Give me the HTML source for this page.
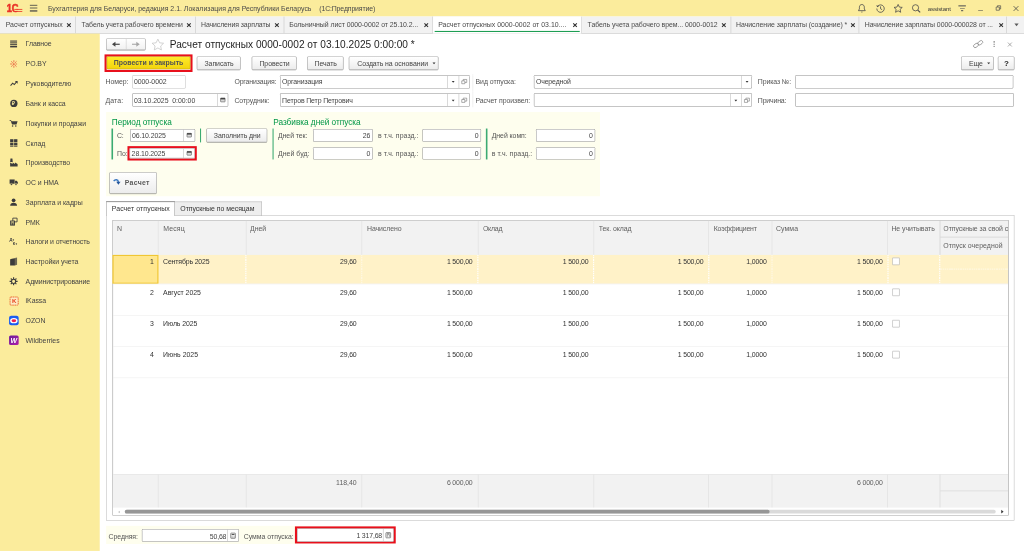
<!DOCTYPE html><html lang="ru"><head><meta charset="utf-8"><title>Расчет отпускных</title><style>
html,body{margin:0;padding:0;background:#fff;}
body{width:1024px;height:551px;overflow:hidden;position:relative;}
#root{position:absolute;left:0;top:0;width:1920px;height:1033px;transform:scale(0.533333);transform-origin:0 0;
 font-family:"Liberation Sans",Arial,sans-serif;font-size:13px;color:#444;background:#fff;overflow:hidden;filter:blur(0.4px);letter-spacing:-0.12px;}
.a{position:absolute;box-sizing:border-box;}
.t{white-space:nowrap;}
.yel{background:#FBEC9C;}
.fld{background:#999;border-radius:2px;z-index:0;}
.fld::before{content:"";position:absolute;left:1px;top:1px;right:1px;bottom:1px;background:#fff;border-radius:1.2px;z-index:-1;}
.btn{background:#a8a8a8;border-radius:2px;box-shadow:0 1px 1px rgba(0,0,0,.22);text-align:center;padding-left:1.5px;white-space:nowrap;color:#444;z-index:0;}
.btn::before{content:"";position:absolute;left:1px;top:1px;right:1px;bottom:1px;background:linear-gradient(#fff,#ececec);border-radius:1.2px;z-index:-1;}
.btn.y{background:#c4a400;}
.btn.y::before{background:linear-gradient(#ffea2a,#f2d40c);}
.btn.nav::before{background:linear-gradient(#fff,#f1f1f1);}
.lbl{color:#555;}
.grn{color:#009646;font-size:15.5px;}
.gbar{background:#3cab72;}
.sub{border-left:1px solid #b8b8b8;}
.hdr{color:#606060;}
.num{color:#333;}
svg{position:absolute;overflow:visible;}
</style></head><body><div id="root">
<div class="a yel" style="left:0.00px;top:0.00px;width:1920.00px;height:31.00px;"></div>
<svg class="a" style="left:12px;top:6px" width="32" height="18" viewBox="0 0 32 18"><text x="0.6" y="16" font-family="Liberation Sans,Arial,sans-serif" font-weight="bold" font-size="20.5" fill="#ea3328" stroke="#ea3328" stroke-width="1.1" textLength="22" lengthAdjust="spacingAndGlyphs">1С</text><path d="M15 11.7 H29.8 M15 15.3 H29.8" stroke="#ea3328" stroke-width="1.7" fill="none"/><path d="M15 13.5H29.8" stroke="#FBEC9C" stroke-width="1.9"/></svg>
<div class="a " style="left:56.20px;top:8.90px;width:13.60px;height:2.20px;background:#6e6a58;"></div>
<div class="a " style="left:56.20px;top:14.10px;width:13.60px;height:2.20px;background:#6e6a58;"></div>
<div class="a " style="left:56.20px;top:19.40px;width:13.60px;height:2.20px;background:#6e6a58;"></div>
<div class="a t " style="left:89.80px;top:6.50px;line-height:20px;color:#4a4a4a;letter-spacing:0.013px;">Бухгалтерия для Беларуси, редакция 2.1. Локализация для Республики Беларусь</div>
<div class="a t " style="left:598.60px;top:6.50px;line-height:20px;color:#4a4a4a;letter-spacing:-0.267px;">(1С:Предприятие)</div>
<svg class="a" style="left:1607.78px;top:7.00px" width="16" height="18" viewBox="0 0 16 18"><path d="M8 1.5c-3 0-4.6 2.3-4.6 5v3.2L1.6 13h12.8l-1.8-3.3V6.5c0-2.7-1.6-5-4.6-5z" fill="none" stroke="#4a4a4a" stroke-width="1.5" stroke-linejoin="round"/><path d="M6.3 15.2a1.8 1.8 0 0 0 3.4 0z" fill="#4a4a4a"/></svg>
<svg class="a" style="left:1641.94px;top:7.00px" width="18" height="18" viewBox="0 0 18 18"><path d="M3.2 5.2A7 7 0 1 1 2 9" fill="none" stroke="#4a4a4a" stroke-width="1.5"/><path d="M0.6 3.2 L3.6 6.6 L6.6 3.6z" fill="#4a4a4a"/><path d="M9 5v4.4l3 1.8" fill="none" stroke="#4a4a4a" stroke-width="1.5"/></svg>
<svg class="a" style="left:1674.75px;top:7.00px" width="18" height="18" viewBox="0 0 18 18"><path d="M9 1.3l2.3 5 5.4.6-4 3.7 1.1 5.4L9 13.3 4.2 16l1.1-5.4-4-3.7 5.4-.6z" fill="none" stroke="#4a4a4a" stroke-width="1.5" stroke-linejoin="round"/></svg>
<svg class="a" style="left:1709.44px;top:7.00px" width="18" height="18" viewBox="0 0 18 18"><circle cx="7.6" cy="7.6" r="5.8" fill="none" stroke="#4a4a4a" stroke-width="1.5"/><path d="M11.8 11.8l4.6 4.6" stroke="#4a4a4a" stroke-width="2"/></svg>
<div class="a t " style="left:1739.62px;top:5.60px;line-height:20px;font-size:11.5px;color:#3a3a3a;letter-spacing:-0.260px;">assistant</div>
<div class="a " style="left:1796.62px;top:10.20px;width:14.82px;height:1.60px;background:#555;"></div>
<div class="a " style="left:1799.62px;top:14.70px;width:9.00px;height:1.60px;background:#555;"></div>
<div class="a " style="left:1802.25px;top:19.20px;width:3.75px;height:1.60px;background:#555;"></div>
<div class="a " style="left:1833.94px;top:18.60px;width:8.81px;height:1.60px;background:#4a4a4a;"></div>
<svg class="a" style="left:1866.62px;top:10.40px" width="10" height="10" viewBox="0 0 10 10"><path d="M.8 3.2h6v6h-6z M3.2 3.2V.8h6v6H6.8" fill="none" stroke="#4a4a4a" stroke-width="1.25"/></svg>
<svg class="a" style="left:1899.38px;top:10.00px" width="12" height="12" viewBox="0 0 12 12"><path d="M1.5 1.5l9 9M10.5 1.5l-9 9" stroke="#4a4a4a" stroke-width="1.5"/></svg>
<div class="a " style="left:0.00px;top:31.00px;width:1920.00px;height:32.00px;background:#f2f2f2;border-bottom:1px solid #c4c4c4;"></div>
<div class="a " style="left:0.00px;top:31.00px;width:141.50px;height:31.00px;border-right:1px solid #c4c4c4;"></div>
<div class="a t " style="left:10.60px;top:36.50px;line-height:20px;color:#4a4a4a;letter-spacing:0.042px;">Расчет отпускных</div>
<svg class="a" style="left:125.40px;top:42.70px" width="8.4" height="8.4" viewBox="0 0 8.4 8.4"><path d="M0.8 0.8l6.8 6.8M7.6 0.8l-6.8 6.8" stroke="#303030" stroke-width="2"/></svg>
<div class="a " style="left:141.50px;top:31.00px;width:225.50px;height:31.00px;border-right:1px solid #c4c4c4;"></div>
<div class="a t " style="left:152.70px;top:36.50px;line-height:20px;color:#4a4a4a;letter-spacing:-0.125px;">Табель учета рабочего времени</div>
<svg class="a" style="left:350.20px;top:42.70px" width="8.4" height="8.4" viewBox="0 0 8.4 8.4"><path d="M0.8 0.8l6.8 6.8M7.6 0.8l-6.8 6.8" stroke="#303030" stroke-width="2"/></svg>
<div class="a " style="left:367.00px;top:31.00px;width:166.00px;height:31.00px;border-right:1px solid #c4c4c4;"></div>
<div class="a t " style="left:377.00px;top:36.50px;line-height:20px;color:#4a4a4a;letter-spacing:-0.215px;">Начисления зарплаты</div>
<svg class="a" style="left:515.00px;top:42.70px" width="8.4" height="8.4" viewBox="0 0 8.4 8.4"><path d="M0.8 0.8l6.8 6.8M7.6 0.8l-6.8 6.8" stroke="#303030" stroke-width="2"/></svg>
<div class="a " style="left:533.00px;top:31.00px;width:279.00px;height:31.00px;border-right:1px solid #c4c4c4;"></div>
<div class="a t " style="left:542.30px;top:36.50px;line-height:20px;color:#4a4a4a;letter-spacing:-0.107px;">Больничный лист 0000-0002 от 25.10.2...</div>
<svg class="a" style="left:794.80px;top:42.70px" width="8.4" height="8.4" viewBox="0 0 8.4 8.4"><path d="M0.8 0.8l6.8 6.8M7.6 0.8l-6.8 6.8" stroke="#303030" stroke-width="2"/></svg>
<div class="a " style="left:812.00px;top:31.00px;width:279.00px;height:32.00px;background:#fff;border-right:1px solid #c4c4c4;"></div>
<div class="a " style="left:815.00px;top:57.50px;width:272.00px;height:2.00px;background:#1e9e54;"></div>
<div class="a t " style="left:821.60px;top:36.50px;line-height:20px;color:#4a4a4a;letter-spacing:0.028px;">Расчет отпускных 0000-0002 от 03.10....</div>
<svg class="a" style="left:1074.20px;top:42.70px" width="8.4" height="8.4" viewBox="0 0 8.4 8.4"><path d="M0.8 0.8l6.8 6.8M7.6 0.8l-6.8 6.8" stroke="#303030" stroke-width="2"/></svg>
<div class="a " style="left:1091.00px;top:31.00px;width:280.00px;height:31.00px;border-right:1px solid #c4c4c4;"></div>
<div class="a t " style="left:1101.60px;top:36.50px;line-height:20px;color:#4a4a4a;letter-spacing:-0.117px;">Табель учета рабочего врем... 0000-0012</div>
<svg class="a" style="left:1352.80px;top:42.70px" width="8.4" height="8.4" viewBox="0 0 8.4 8.4"><path d="M0.8 0.8l6.8 6.8M7.6 0.8l-6.8 6.8" stroke="#303030" stroke-width="2"/></svg>
<div class="a " style="left:1371.00px;top:31.00px;width:240.00px;height:31.00px;border-right:1px solid #c4c4c4;"></div>
<div class="a t " style="left:1380.20px;top:36.50px;line-height:20px;color:#4a4a4a;letter-spacing:-0.083px;">Начисление зарплаты (создание) *</div>
<svg class="a" style="left:1595.20px;top:42.70px" width="8.4" height="8.4" viewBox="0 0 8.4 8.4"><path d="M0.8 0.8l6.8 6.8M7.6 0.8l-6.8 6.8" stroke="#303030" stroke-width="2"/></svg>
<div class="a " style="left:1611.00px;top:31.00px;width:277.00px;height:31.00px;border-right:1px solid #c4c4c4;"></div>
<div class="a t " style="left:1621.50px;top:36.50px;line-height:20px;color:#4a4a4a;letter-spacing:-0.139px;">Начисление зарплаты 0000-000028 от ...</div>
<svg class="a" style="left:1872.60px;top:42.70px" width="8.4" height="8.4" viewBox="0 0 8.4 8.4"><path d="M0.8 0.8l6.8 6.8M7.6 0.8l-6.8 6.8" stroke="#303030" stroke-width="2"/></svg>
<svg class="a" style="left:1901.5px;top:44px" width="8" height="5" viewBox="0 0 8 5"><path d="M0 0h8L4 5z" fill="#5a5a5a"/></svg>
<div class="a yel" style="left:0.00px;top:63.00px;width:186.50px;height:970.00px;"></div>
<svg class="a" style="left:19.00px;top:75.50px" width="13" height="14" viewBox="0 0 13 14"><rect x="0" y="0" width="13" height="2" fill="#3c3c3c"/><rect x="0" y="3.4" width="13" height="2" fill="#3c3c3c"/><rect x="0" y="6.8" width="13" height="2" fill="#3c3c3c"/><rect x="0" y="10.2" width="13" height="2" fill="#3c3c3c"/><rect x="0" y="12.2" width="13" height="1.2" fill="#3c3c3c" opacity=".6"/></svg>
<div class="a t " style="left:48.00px;top:73.40px;line-height:20px;color:#444;">Главное</div>
<svg class="a" style="left:18.50px;top:112.55px" width="14" height="14" viewBox="0 0 14 14"><g stroke="#e4452c" stroke-width="1.3" fill="none"><path d="M7 0v4M7 10v4M0 7h4M10 7h3M2 2l3 3M2 12l3-3M12 2l-3 3M12 12l-3-3"/></g><circle cx="7" cy="7" r="1.6" fill="#e4452c"/></svg>
<div class="a t " style="left:48.00px;top:110.45px;line-height:20px;color:#444;">PO.BY</div>
<svg class="a" style="left:18.50px;top:150.10px" width="14" height="13" viewBox="0 0 14 13"><path d="M0.8 10.5l4-4.5 3 2.6 4.6-5.4" fill="none" stroke="#3c3c3c" stroke-width="2"/><path d="M9 2h5v5z" fill="#3c3c3c"/></svg>
<div class="a t " style="left:48.00px;top:147.50px;line-height:20px;color:#444;">Руководителю</div>
<svg class="a" style="left:18.50px;top:186.65px" width="14" height="14" viewBox="0 0 14 14"><circle cx="7" cy="7" r="6.8" fill="#3c3c3c"/><text x="7" y="10.6" text-anchor="middle" font-size="10" font-weight="bold" fill="#FBEC9C" font-family="Liberation Sans,Arial,sans-serif">₽</text></svg>
<div class="a t " style="left:48.00px;top:184.55px;line-height:20px;color:#444;">Банк и касса</div>
<svg class="a" style="left:18.00px;top:223.70px" width="15" height="14" viewBox="0 0 15 14"><path d="M0 1h2.6l1 2.2H15l-2 6.3H4.6L2 2.6H0z" fill="#3c3c3c"/><circle cx="5.6" cy="12.3" r="1.5" fill="#3c3c3c"/><circle cx="11.6" cy="12.3" r="1.5" fill="#3c3c3c"/></svg>
<div class="a t " style="left:48.00px;top:221.60px;line-height:20px;color:#444;">Покупки и продажи</div>
<svg class="a" style="left:18.50px;top:260.75px" width="14" height="14" viewBox="0 0 14 14"><rect x="0" y="0" width="6.2" height="6" fill="#3c3c3c"/><rect x="0" y="7.2" width="6.2" height="4.4" fill="#3c3c3c"/><rect x="0" y="12.4" width="6.2" height="1.6" fill="#3c3c3c"/><rect x="7.4" y="0" width="6.2" height="6" fill="#3c3c3c"/><rect x="7.4" y="7.2" width="6.2" height="4.4" fill="#3c3c3c"/><rect x="7.4" y="12.4" width="6.2" height="1.6" fill="#3c3c3c"/></svg>
<div class="a t " style="left:48.00px;top:258.65px;line-height:20px;color:#444;">Склад</div>
<svg class="a" style="left:18.50px;top:296.80px" width="14" height="15" viewBox="0 0 14 15"><path d="M0 15V7.6l4.6 3V7.6l4.6 3V7.6l4.8 3V15z" fill="#3c3c3c"/><path d="M.6 0h3.6l.7 6.8H0z" fill="#3c3c3c"/></svg>
<div class="a t " style="left:48.00px;top:295.70px;line-height:20px;color:#444;">Производство</div>
<svg class="a" style="left:17.50px;top:335.35px" width="16" height="13" viewBox="0 0 16 13"><path d="M0 1.5h9.5v8H0z" fill="#3c3c3c"/><path d="M10.3 4h3l2.2 2.6v2.9h-5.2z" fill="#3c3c3c"/><circle cx="3.5" cy="10.6" r="1.8" fill="#3c3c3c" stroke="#FBEC9C" stroke-width=".7"/><circle cx="12" cy="10.6" r="1.8" fill="#3c3c3c" stroke="#FBEC9C" stroke-width=".7"/></svg>
<div class="a t " style="left:48.00px;top:332.75px;line-height:20px;color:#444;">ОС и НМА</div>
<svg class="a" style="left:19.00px;top:371.90px" width="13" height="14" viewBox="0 0 13 14"><circle cx="6.5" cy="3.6" r="3.5" fill="#3c3c3c"/><path d="M0 14c0-4 2.6-6 6.5-6s6.5 2 6.5 6z" fill="#3c3c3c"/></svg>
<div class="a t " style="left:48.00px;top:369.80px;line-height:20px;color:#444;">Зарплата и кадры</div>
<svg class="a" style="left:18.50px;top:408.95px" width="14" height="14" viewBox="0 0 14 14"><path d="M5 0h8v7H5z" fill="none" stroke="#3c3c3c" stroke-width="1.6"/><path d="M0 4.5h9V14H0z" fill="#3c3c3c"/><rect x="1.8" y="6.3" width="5.4" height="2" fill="#FBEC9C"/><rect x="1.8" y="10" width="2" height="1.6" fill="#FBEC9C"/><rect x="5" y="10" width="2" height="1.6" fill="#FBEC9C"/></svg>
<div class="a t " style="left:48.00px;top:406.85px;line-height:20px;color:#444;">РМК</div>
<svg class="a" style="left:17.50px;top:446.00px" width="16" height="14" viewBox="0 0 16 14"><text x="0" y="6" font-size="7.5" font-weight="bold" fill="#3c3c3c" font-family="Liberation Sans,Arial,sans-serif">Дт</text><text x="6" y="13" font-size="7.5" font-weight="bold" fill="#3c3c3c" font-family="Liberation Sans,Arial,sans-serif">Кт</text></svg>
<div class="a t " style="left:48.00px;top:443.90px;line-height:20px;color:#444;letter-spacing:-0.196px;">Налоги и отчетность</div>
<svg class="a" style="left:19.00px;top:482.55px" width="13" height="15" viewBox="0 0 13 15"><path d="M0 3.2L9 1.4V15H0z" fill="#3c3c3c"/><path d="M9 1.4l4-1.4v13.2L9 15z" fill="#3c3c3c" opacity=".75"/><path d="M0 3.2l4-1.6 9-1.6-4 1.4z" fill="#3c3c3c" opacity=".55"/></svg>
<div class="a t " style="left:48.00px;top:480.95px;line-height:20px;color:#444;">Настройки учета</div>
<svg class="a" style="left:18.00px;top:519.60px" width="15" height="15" viewBox="0 0 15 15"><circle cx="7.5" cy="7.5" r="3.9" fill="none" stroke="#3c3c3c" stroke-width="2"/><g stroke="#3c3c3c" stroke-width="2.1"><path d="M7.5 0v3M7.5 12v3M0 7.5h3M12 7.5h3M2.2 2.2l2.1 2.1M10.7 10.7l2.1 2.1M12.8 2.2l-2.1 2.1M2.2 12.8l2.1-2.1"/></g></svg>
<div class="a t " style="left:48.00px;top:518.00px;line-height:20px;color:#444;letter-spacing:-0.185px;">Администрирование</div>
<svg class="a" style="left:17.50px;top:555.65px" width="17" height="17" viewBox="0 0 17 17"><rect x=".9" y=".9" width="15.2" height="15.2" rx="1.5" fill="#fdecc4" stroke="#e8501e" stroke-width="1.6" stroke-dasharray="2.4 1"/><text x="8.7" y="12.6" text-anchor="middle" font-size="11.5" font-weight="bold" fill="#e8401e" font-family="Liberation Sans,Arial,sans-serif">K</text></svg>
<div class="a t " style="left:48.00px;top:555.05px;line-height:20px;color:#444;">iKassa</div>
<svg class="a" style="left:17.00px;top:592.20px" width="18" height="18" viewBox="0 0 18 18"><rect width="18" height="18" rx="4" fill="#1a5cf2"/><ellipse cx="9" cy="9.2" rx="7" ry="5" fill="#fff"/><ellipse cx="9" cy="9.6" rx="4.4" ry="2.8" fill="#ee1c50"/></svg>
<div class="a t " style="left:48.00px;top:592.10px;line-height:20px;color:#444;">OZON</div>
<svg class="a" style="left:17.00px;top:629.25px" width="18" height="18" viewBox="0 0 18 18"><defs><linearGradient id="wb" x1="0" y1="0" x2="1" y2="1"><stop offset="0" stop-color="#6a1b9a"/><stop offset="1" stop-color="#b01fa8"/></linearGradient></defs><rect width="18" height="18" rx="3" fill="url(#wb)"/><text x="9" y="13.6" text-anchor="middle" font-size="13" font-weight="bold" font-style="italic" fill="#fff" font-family="Liberation Sans,Arial,sans-serif">W</text></svg>
<div class="a t " style="left:48.00px;top:629.15px;line-height:20px;color:#444;">Wildberries</div>
<div class="a btn nav" style="left:199.30px;top:71.50px;width:73.70px;height:22.50px;"></div>
<div class="a " style="left:235.50px;top:72.50px;width:1.00px;height:20.50px;background:#c8c8c8;"></div>
<svg class="a" style="left:210.30px;top:77.80px" width="15" height="10" viewBox="0 0 15 10"><path d="M14.5 5H3" stroke="#454545" stroke-width="2.2"/><path d="M0 5l6.4-4.8v9.6z" fill="#454545"/></svg>
<svg class="a" style="left:247.00px;top:77.80px" width="15" height="10" viewBox="0 0 15 10"><path d="M0.5 5H11" stroke="#a6a6a6" stroke-width="2"/><path d="M15 5l-6.4-4.8v9.6z" fill="#a6a6a6"/></svg>
<svg class="a" style="left:284.00px;top:71.70px" width="24" height="23" viewBox="0 0 22 21"><path d="M11 1.2l3 6.3 6.8.8-5 4.7 1.3 6.8L11 16.4 4.9 19.8l1.3-6.8-5-4.7 6.8-.8z" fill="none" stroke="#c2c2c2" stroke-width="1.25" stroke-linejoin="round"/></svg>
<div class="a t " style="left:318.30px;top:71.50px;line-height:24px;font-size:19px;color:#1e1e1e;letter-spacing:0.037px;">Расчет отпускных 0000-0002 от 03.10.2025 0:00:00 *</div>
<svg class="a" style="left:1823.75px;top:73.88px" width="20" height="18" viewBox="0 0 20 18"><g fill="none" stroke="#8a8a8a" stroke-width="1.4"><rect x="1" y="8.2" width="10" height="6" rx="3" transform="rotate(-35 6 11.2)"/><rect x="9" y="3.2" width="10" height="6" rx="3" transform="rotate(-35 14 6.2)"/></g></svg>
<div class="a " style="left:1863.02px;top:77.45px;width:2.40px;height:2.60px;background:#707070;"></div>
<div class="a " style="left:1863.02px;top:81.58px;width:2.40px;height:2.60px;background:#707070;"></div>
<div class="a " style="left:1863.02px;top:85.70px;width:2.40px;height:2.60px;background:#707070;"></div>
<svg class="a" style="left:1888.78px;top:78.56px" width="9" height="9" viewBox="0 0 9 9"><path d="M0.8 0.8l7.4 7.4M8.2 0.8l-7.4 7.4" stroke="#8a8a8a" stroke-width="1.3"/></svg>
<div class="a " style="left:196.00px;top:102.00px;width:165.40px;height:32.80px;border:4.4px solid #e8101c;"></div>
<div class="a btn y" style="left:200.20px;top:105.90px;width:156.80px;height:24.60px;font-weight:bold;color:#525252;line-height:24.6px;letter-spacing:0;padding-left:0;box-shadow:none;">Провести и закрыть</div>
<div class="a btn" style="left:369.00px;top:105.50px;width:82.00px;height:25.50px;line-height:25.5px;">Записать</div>
<div class="a btn" style="left:472.00px;top:105.50px;width:84.00px;height:25.50px;line-height:25.5px;">Провести</div>
<div class="a btn" style="left:575.60px;top:105.50px;width:68.90px;height:25.50px;line-height:25.5px;">Печать</div>
<div class="a btn" style="left:654.00px;top:105.50px;width:168.00px;height:25.50px;line-height:25.5px;"></div>
<div class="a t " style="left:669.80px;top:108.50px;line-height:20px;color:#444;letter-spacing:-0.098px;">Создать на основании</div>
<svg class="a" style="left:810.70px;top:117.30px" width="5.6" height="3.4" viewBox="0 0 5.6 3.4"><path d="M0 0h5.6L2.8 3.4z" fill="#333"/></svg>
<div class="a btn" style="left:1802.00px;top:105.50px;width:61.00px;height:25.50px;line-height:25.5px;"></div>
<div class="a t " style="left:1816.80px;top:108.50px;line-height:20px;color:#444;">Еще</div>
<svg class="a" style="left:1850.70px;top:117.30px" width="5.6" height="3.4" viewBox="0 0 5.6 3.4"><path d="M0 0h5.6L2.8 3.4z" fill="#333"/></svg>
<div class="a btn" style="left:1871.00px;top:105.50px;width:30.50px;height:25.50px;line-height:25.5px;font-weight:bold;font-size:15px;color:#222;">?</div>
<div class="a t lbl" style="left:198.00px;top:144.40px;line-height:20px;letter-spacing:-0.206px;">Номер:</div>
<div class="a fld" style="left:247.50px;top:140.60px;width:100.50px;height:25.00px;background:#c4c4c4;"></div>
<div class="a t " style="left:251.30px;top:144.40px;line-height:20px;color:#444;letter-spacing:-0.146px;">0000-0002</div>
<div class="a t lbl" style="left:198.00px;top:179.20px;line-height:20px;letter-spacing:0.100px;">Дата:</div>
<div class="a fld" style="left:247.50px;top:175.30px;width:180.50px;height:25.20px;"></div>
<div class="a t " style="left:251.30px;top:179.20px;line-height:20px;color:#444;letter-spacing:-0.048px;">03.10.2025&nbsp; 0:00:00</div>
<div class="a " style="left:407.30px;top:176.30px;width:1.00px;height:23.20px;background:#b8b8b8;"></div>
<svg class="a" style="left:413.35px;top:183.30px" width="9.6" height="8.6" viewBox="0 0 9.6 8.6"><rect x=".6" y="1" width="8.4" height="7" rx=".8" fill="#d8d8d8" stroke="#555" stroke-width="1.1"/><rect x=".6" y=".6" width="8.4" height="2.8" fill="#444"/></svg>
<div class="a t lbl" style="left:439.50px;top:144.40px;line-height:20px;letter-spacing:-0.274px;">Организация:</div>
<div class="a fld" style="left:525.00px;top:140.60px;width:355.80px;height:25.00px;"></div>
<div class="a t " style="left:528.80px;top:144.40px;line-height:20px;color:#444;letter-spacing:-0.241px;">Организация</div>
<div class="a " style="left:838.60px;top:141.60px;width:1.00px;height:23.00px;background:#b8b8b8;"></div>
<svg class="a" style="left:846.95px;top:152.00px" width="5.4" height="3.2" viewBox="0 0 5.4 3.2"><path d="M0 0h5.4L2.7 3.2z" fill="#333"/></svg>
<div class="a " style="left:859.70px;top:141.60px;width:1.00px;height:23.00px;background:#b8b8b8;"></div>
<svg class="a" style="left:865.25px;top:148.10px" width="11" height="10" viewBox="0 0 11 10"><path d="M3.5 1h6.6v5.6H3.5z" fill="none" stroke="#666" stroke-width="1"/><path d="M.8 3.6h5.8v5.4H.8z" fill="#fff" stroke="#666" stroke-width="1"/></svg>
<div class="a t lbl" style="left:439.50px;top:179.20px;line-height:20px;letter-spacing:-0.129px;">Сотрудник:</div>
<div class="a fld" style="left:525.00px;top:175.30px;width:355.80px;height:25.20px;"></div>
<div class="a t " style="left:528.80px;top:179.20px;line-height:20px;color:#444;letter-spacing:-0.237px;">Петров Петр Петрович</div>
<div class="a " style="left:838.60px;top:176.30px;width:1.00px;height:23.20px;background:#b8b8b8;"></div>
<svg class="a" style="left:846.95px;top:186.80px" width="5.4" height="3.2" viewBox="0 0 5.4 3.2"><path d="M0 0h5.4L2.7 3.2z" fill="#333"/></svg>
<div class="a " style="left:859.70px;top:176.30px;width:1.00px;height:23.20px;background:#b8b8b8;"></div>
<svg class="a" style="left:865.25px;top:182.90px" width="11" height="10" viewBox="0 0 11 10"><path d="M3.5 1h6.6v5.6H3.5z" fill="none" stroke="#666" stroke-width="1"/><path d="M.8 3.6h5.8v5.4H.8z" fill="#fff" stroke="#666" stroke-width="1"/></svg>
<div class="a " style="left:885.50px;top:140.00px;width:1.00px;height:61.00px;border-left:1px dotted #c8c8c8;"></div>
<div class="a t lbl" style="left:891.50px;top:144.40px;line-height:20px;letter-spacing:-0.067px;">Вид отпуска:</div>
<div class="a fld" style="left:1001.00px;top:140.60px;width:409.00px;height:25.00px;"></div>
<div class="a t " style="left:1004.80px;top:144.40px;line-height:20px;color:#444;letter-spacing:-0.243px;">Очередной</div>
<div class="a " style="left:1390.00px;top:141.60px;width:1.00px;height:23.00px;background:#b8b8b8;"></div>
<svg class="a" style="left:1397.80px;top:152.00px" width="5.4" height="3.2" viewBox="0 0 5.4 3.2"><path d="M0 0h5.4L2.7 3.2z" fill="#333"/></svg>
<div class="a t lbl" style="left:891.50px;top:179.20px;line-height:20px;letter-spacing:-0.116px;">Расчет произвел:</div>
<div class="a fld" style="left:1001.00px;top:175.30px;width:409.00px;height:25.20px;"></div>
<div class="a " style="left:1368.80px;top:176.30px;width:1.00px;height:23.20px;background:#b8b8b8;"></div>
<svg class="a" style="left:1377.20px;top:186.80px" width="5.4" height="3.2" viewBox="0 0 5.4 3.2"><path d="M0 0h5.4L2.7 3.2z" fill="#333"/></svg>
<div class="a " style="left:1390.00px;top:176.30px;width:1.00px;height:23.20px;background:#b8b8b8;"></div>
<svg class="a" style="left:1395.00px;top:182.90px" width="11" height="10" viewBox="0 0 11 10"><path d="M3.5 1h6.6v5.6H3.5z" fill="none" stroke="#666" stroke-width="1"/><path d="M.8 3.6h5.8v5.4H.8z" fill="#fff" stroke="#666" stroke-width="1"/></svg>
<div class="a t lbl" style="left:1421.00px;top:144.40px;line-height:20px;letter-spacing:-0.215px;">Приказ №:</div>
<div class="a fld" style="left:1490.60px;top:140.60px;width:409.90px;height:25.00px;"></div>
<div class="a t lbl" style="left:1421.00px;top:179.20px;line-height:20px;letter-spacing:-0.342px;">Причина:</div>
<div class="a fld" style="left:1490.60px;top:175.30px;width:410.40px;height:25.20px;"></div>
<div class="a " style="left:198.50px;top:209.50px;width:926.00px;height:158.50px;background:#fefeee;"></div>
<div class="a t grn" style="left:209.50px;top:218.00px;line-height:22px;letter-spacing:-0.078px;">Период отпуска</div>
<div class="a t grn" style="left:512.30px;top:218.00px;line-height:22px;letter-spacing:-0.053px;">Разбивка дней отпуска</div>
<div class="a gbar" style="left:209.00px;top:241.40px;width:2.50px;height:58.10px;"></div>
<div class="a t lbl" style="left:219.40px;top:245.35px;line-height:20px;letter-spacing:-0.300px;">С:</div>
<div class="a fld" style="left:243.75px;top:242.30px;width:121.85px;height:23.50px;"></div>
<div class="a t " style="left:247.55px;top:245.35px;line-height:20px;color:#444;letter-spacing:-0.196px;">06.10.2025</div>
<div class="a " style="left:343.60px;top:243.30px;width:1.00px;height:21.50px;background:#b8b8b8;"></div>
<svg class="a" style="left:350.30px;top:249.45px" width="9.6" height="8.6" viewBox="0 0 9.6 8.6"><rect x=".6" y="1" width="8.4" height="7" rx=".8" fill="#d8d8d8" stroke="#555" stroke-width="1.1"/><rect x=".6" y=".6" width="8.4" height="2.8" fill="#444"/></svg>
<div class="a t lbl" style="left:219.40px;top:279.05px;line-height:20px;">По:</div>
<div class="a " style="left:238.90px;top:273.90px;width:129.90px;height:27.40px;border:4.4px solid #e8101c;background:#fff;"></div>
<div class="a fld" style="left:243.00px;top:278.00px;width:122.00px;height:19.00px;background:#b0b0b0;"></div>
<div class="a t " style="left:246.80px;top:278.80px;line-height:20px;color:#444;letter-spacing:-0.196px;">28.10.2025</div>
<div class="a " style="left:343.60px;top:279.00px;width:1.00px;height:17.00px;background:#b8b8b8;"></div>
<svg class="a" style="left:350.00px;top:282.90px" width="9.6" height="8.6" viewBox="0 0 9.6 8.6"><rect x=".6" y="1" width="8.4" height="7" rx=".8" fill="#d8d8d8" stroke="#555" stroke-width="1.1"/><rect x=".6" y=".6" width="8.4" height="2.8" fill="#444"/></svg>
<div class="a gbar" style="left:374.90px;top:241.40px;width:2.50px;height:25.80px;"></div>
<div class="a btn" style="left:386.70px;top:241.40px;width:114.80px;height:25.80px;line-height:25.8px;">Заполнить дни</div>
<div class="a gbar" style="left:510.90px;top:241.40px;width:2.50px;height:58.10px;"></div>
<div class="a t lbl" style="left:521.25px;top:245.35px;line-height:20px;letter-spacing:-0.141px;">Дней тек:</div>
<div class="a fld" style="left:587.00px;top:242.30px;width:112.00px;height:23.50px;"></div>
<div class="a t " style="right:1225.70px;top:245.35px;line-height:20px;color:#444;">26</div>
<div class="a t lbl" style="left:521.25px;top:279.05px;line-height:20px;letter-spacing:0.061px;">Дней буд:</div>
<div class="a fld" style="left:587.00px;top:276.10px;width:112.00px;height:23.30px;"></div>
<div class="a t " style="right:1225.70px;top:279.05px;line-height:20px;color:#444;">0</div>
<div class="a t lbl" style="left:708.75px;top:245.35px;line-height:20px;letter-spacing:0.117px;">в т.ч. празд.:</div>
<div class="a fld" style="left:791.70px;top:242.30px;width:110.30px;height:23.50px;"></div>
<div class="a t " style="right:1022.70px;top:245.35px;line-height:20px;color:#444;">0</div>
<div class="a t lbl" style="left:708.75px;top:279.05px;line-height:20px;letter-spacing:0.117px;">в т.ч. празд.:</div>
<div class="a fld" style="left:791.70px;top:276.10px;width:110.30px;height:23.30px;"></div>
<div class="a t " style="right:1022.70px;top:279.05px;line-height:20px;color:#444;">0</div>
<div class="a gbar" style="left:911.40px;top:241.40px;width:2.50px;height:58.10px;"></div>
<div class="a t lbl" style="left:922.00px;top:245.35px;line-height:20px;letter-spacing:-0.127px;">Дней комп:</div>
<div class="a fld" style="left:1005.00px;top:242.30px;width:111.00px;height:23.50px;"></div>
<div class="a t " style="right:808.70px;top:245.35px;line-height:20px;color:#444;">0</div>
<div class="a t lbl" style="left:922.00px;top:279.05px;line-height:20px;letter-spacing:0.117px;">в т.ч. празд.:</div>
<div class="a fld" style="left:1005.00px;top:276.10px;width:111.00px;height:23.30px;"></div>
<div class="a t " style="right:808.70px;top:279.05px;line-height:20px;color:#444;">0</div>
<div class="a btn" style="left:204.80px;top:322.50px;width:89.40px;height:40.00px;"></div>
<svg class="a" style="left:212.20px;top:335.00px" width="14" height="12" viewBox="0 0 14 12"><path d="M1.2 4.6C3.4 1 9.6 0.6 10 6.4" fill="none" stroke="#3a78c0" stroke-width="2.6"/><path d="M6 6h8L10 11.4z" fill="#24569c"/></svg>
<div class="a t " style="left:234.00px;top:333.00px;line-height:20px;font-weight:bold;color:#5a5a5a;letter-spacing:0.481px;">Расчет</div>
<div class="a " style="left:199.20px;top:404.00px;width:1702.50px;height:571.50px;border:1px solid #bcbcbc;background:#fff;"></div>
<div class="a " style="left:327.50px;top:378.00px;width:163.20px;height:26.80px;background:#eeeeee;"></div>
<div class="a " style="left:327.50px;top:377.60px;width:163.20px;height:1.10px;background:#b0b0b0;"></div>
<div class="a " style="left:489.60px;top:378.00px;width:1.10px;height:26.80px;background:#b0b0b0;"></div>
<div class="a " style="left:327.50px;top:403.90px;width:163.20px;height:1.10px;background:#b8b8b8;"></div>
<div class="a t " style="left:338.00px;top:381.50px;line-height:20px;color:#333;letter-spacing:-0.064px;">Отпускные по месяцам</div>
<div class="a " style="left:199.20px;top:377.60px;width:128.80px;height:27.90px;background:#fff;"></div>
<div class="a " style="left:199.20px;top:377.60px;width:1.10px;height:27.90px;background:#9a9a9a;"></div>
<div class="a " style="left:199.20px;top:377.40px;width:128.80px;height:1.20px;background:#9a9a9a;"></div>
<div class="a " style="left:326.90px;top:377.60px;width:1.10px;height:27.90px;background:#9a9a9a;"></div>
<div class="a t " style="left:209.50px;top:381.50px;line-height:20px;color:#333;letter-spacing:0.156px;">Расчет отпускных</div>
<div class="a " style="left:211.00px;top:412.50px;width:1679.50px;height:554.25px;border:1px solid #929292;background:#fff;"></div>
<div class="a " style="left:212.00px;top:413.50px;width:1677.50px;height:64.50px;background:#f2f2f2;"></div>
<div class="a t hdr" style="left:219.40px;top:420.00px;line-height:18px;width:75.85px;overflow:hidden;">N</div>
<div class="a " style="left:296.25px;top:413.50px;width:1.00px;height:64.50px;background:#dcdcdc;"></div>
<div class="a t hdr" style="left:306.25px;top:420.00px;line-height:18px;width:153.25px;overflow:hidden;letter-spacing:0.202px;">Месяц</div>
<div class="a " style="left:460.50px;top:413.50px;width:1.00px;height:64.50px;background:#dcdcdc;"></div>
<div class="a t hdr" style="left:468.90px;top:420.00px;line-height:18px;width:208.10px;overflow:hidden;">Дней</div>
<div class="a " style="left:678.00px;top:413.50px;width:1.00px;height:64.50px;background:#dcdcdc;"></div>
<div class="a t hdr" style="left:688.00px;top:420.00px;line-height:18px;width:206.50px;overflow:hidden;">Начислено</div>
<div class="a " style="left:895.50px;top:413.50px;width:1.00px;height:64.50px;background:#dcdcdc;"></div>
<div class="a t hdr" style="left:905.50px;top:420.00px;line-height:18px;width:206.10px;overflow:hidden;letter-spacing:-0.387px;">Оклад</div>
<div class="a " style="left:1112.60px;top:413.50px;width:1.00px;height:64.50px;background:#dcdcdc;"></div>
<div class="a t hdr" style="left:1122.60px;top:420.00px;line-height:18px;width:204.80px;overflow:hidden;letter-spacing:-0.146px;">Тек. оклад</div>
<div class="a " style="left:1328.40px;top:413.50px;width:1.00px;height:64.50px;background:#dcdcdc;"></div>
<div class="a t hdr" style="left:1338.40px;top:420.00px;line-height:18px;width:107.60px;overflow:hidden;letter-spacing:-0.446px;">Коэффициент</div>
<div class="a " style="left:1447.00px;top:413.50px;width:1.00px;height:64.50px;background:#dcdcdc;"></div>
<div class="a t hdr" style="left:1454.80px;top:420.00px;line-height:18px;width:208.60px;overflow:hidden;letter-spacing:0.163px;">Сумма</div>
<div class="a " style="left:1664.40px;top:413.50px;width:1.00px;height:64.50px;background:#dcdcdc;"></div>
<div class="a t hdr" style="left:1671.40px;top:420.00px;line-height:18px;width:89.35px;overflow:hidden;letter-spacing:-0.109px;">Не учитывать</div>
<div class="a " style="left:1761.75px;top:413.50px;width:1.00px;height:64.50px;background:#c6c6c6;"></div>
<div class="a t hdr" style="left:1768.75px;top:420.00px;line-height:18px;width:120.75px;overflow:hidden;">Отпускные за свой с</div>
<div class="a " style="left:1762.75px;top:444.19px;width:126.75px;height:1.00px;background:#c6c6c6;"></div>
<div class="a t hdr" style="left:1768.75px;top:450.50px;line-height:20px;letter-spacing:0.091px;">Отпуск очередной</div>
<div class="a " style="left:212.00px;top:478.00px;width:1677.50px;height:54.40px;background:#fff2c8;"></div>
<div class="a " style="left:211.00px;top:477.50px;width:86.25px;height:54.90px;background:#ffe78e;border:2.2px solid #f0c634;"></div>
<div class="a " style="left:460.20px;top:478.00px;width:1.80px;height:54.40px;background:repeating-linear-gradient(180deg,#fff 0 2.4px,rgba(255,255,255,.25) 2.4px 4.2px);"></div>
<div class="a " style="left:677.70px;top:478.00px;width:1.80px;height:54.40px;background:repeating-linear-gradient(180deg,#fff 0 2.4px,rgba(255,255,255,.25) 2.4px 4.2px);"></div>
<div class="a " style="left:895.20px;top:478.00px;width:1.80px;height:54.40px;background:repeating-linear-gradient(180deg,#fff 0 2.4px,rgba(255,255,255,.25) 2.4px 4.2px);"></div>
<div class="a " style="left:1112.30px;top:478.00px;width:1.80px;height:54.40px;background:repeating-linear-gradient(180deg,#fff 0 2.4px,rgba(255,255,255,.25) 2.4px 4.2px);"></div>
<div class="a " style="left:1328.10px;top:478.00px;width:1.80px;height:54.40px;background:repeating-linear-gradient(180deg,#fff 0 2.4px,rgba(255,255,255,.25) 2.4px 4.2px);"></div>
<div class="a " style="left:1446.70px;top:478.00px;width:1.80px;height:54.40px;background:repeating-linear-gradient(180deg,#fff 0 2.4px,rgba(255,255,255,.25) 2.4px 4.2px);"></div>
<div class="a " style="left:1664.10px;top:478.00px;width:1.80px;height:54.40px;background:repeating-linear-gradient(180deg,#fff 0 2.4px,rgba(255,255,255,.25) 2.4px 4.2px);"></div>
<div class="a " style="left:1761.45px;top:478.00px;width:1.80px;height:54.40px;background:repeating-linear-gradient(180deg,#fff 0 2.4px,rgba(255,255,255,.25) 2.4px 4.2px);"></div>
<div class="a " style="left:1762.75px;top:503.60px;width:126.75px;height:1.80px;background:repeating-linear-gradient(90deg,#fff 0 2.4px,rgba(255,255,255,.25) 2.4px 4.2px);"></div>
<div class="a t num" style="right:1631.75px;top:480.70px;line-height:20px;">1</div>
<div class="a t num" style="left:305.75px;top:480.70px;line-height:20px;letter-spacing:-0.289px;">Сентябрь 2025</div>
<div class="a t num" style="right:1251.50px;top:480.70px;line-height:20px;letter-spacing:-0.308px;">29,60</div>
<div class="a t num" style="right:1034.00px;top:480.70px;line-height:20px;letter-spacing:-0.329px;">1 500,00</div>
<div class="a t num" style="right:816.90px;top:480.70px;line-height:20px;letter-spacing:-0.329px;">1 500,00</div>
<div class="a t num" style="right:601.10px;top:480.70px;line-height:20px;letter-spacing:-0.329px;">1 500,00</div>
<div class="a t num" style="right:482.50px;top:480.70px;line-height:20px;letter-spacing:-0.232px;">1,0000</div>
<div class="a t num" style="right:265.10px;top:480.70px;line-height:20px;letter-spacing:-0.329px;">1 500,00</div>
<div class="a " style="left:1673.40px;top:483.20px;width:14.00px;height:14.00px;background:#fff;border:1px solid #a8a8a8;border-radius:1px;"></div>
<div class="a " style="left:212.00px;top:532.40px;width:1677.50px;height:1.00px;background:#ececec;"></div>
<div class="a t num" style="right:1631.75px;top:538.90px;line-height:20px;">2</div>
<div class="a t num" style="left:305.75px;top:538.90px;line-height:20px;letter-spacing:-0.076px;">Август 2025</div>
<div class="a t num" style="right:1251.50px;top:538.90px;line-height:20px;letter-spacing:-0.308px;">29,60</div>
<div class="a t num" style="right:1034.00px;top:538.90px;line-height:20px;letter-spacing:-0.329px;">1 500,00</div>
<div class="a t num" style="right:816.90px;top:538.90px;line-height:20px;letter-spacing:-0.329px;">1 500,00</div>
<div class="a t num" style="right:601.10px;top:538.90px;line-height:20px;letter-spacing:-0.329px;">1 500,00</div>
<div class="a t num" style="right:482.50px;top:538.90px;line-height:20px;letter-spacing:-0.232px;">1,0000</div>
<div class="a t num" style="right:265.10px;top:538.90px;line-height:20px;letter-spacing:-0.329px;">1 500,00</div>
<div class="a " style="left:1673.40px;top:541.40px;width:14.00px;height:14.00px;background:#fff;border:1px solid #a8a8a8;border-radius:1px;"></div>
<div class="a " style="left:212.00px;top:590.80px;width:1677.50px;height:1.00px;background:#ececec;"></div>
<div class="a t num" style="right:1631.75px;top:597.30px;line-height:20px;">3</div>
<div class="a t num" style="left:305.75px;top:597.30px;line-height:20px;letter-spacing:-0.175px;">Июль 2025</div>
<div class="a t num" style="right:1251.50px;top:597.30px;line-height:20px;letter-spacing:-0.308px;">29,60</div>
<div class="a t num" style="right:1034.00px;top:597.30px;line-height:20px;letter-spacing:-0.329px;">1 500,00</div>
<div class="a t num" style="right:816.90px;top:597.30px;line-height:20px;letter-spacing:-0.329px;">1 500,00</div>
<div class="a t num" style="right:601.10px;top:597.30px;line-height:20px;letter-spacing:-0.329px;">1 500,00</div>
<div class="a t num" style="right:482.50px;top:597.30px;line-height:20px;letter-spacing:-0.232px;">1,0000</div>
<div class="a t num" style="right:265.10px;top:597.30px;line-height:20px;letter-spacing:-0.329px;">1 500,00</div>
<div class="a " style="left:1673.40px;top:599.80px;width:14.00px;height:14.00px;background:#fff;border:1px solid #a8a8a8;border-radius:1px;"></div>
<div class="a " style="left:212.00px;top:649.10px;width:1677.50px;height:1.00px;background:#ececec;"></div>
<div class="a t num" style="right:1631.75px;top:655.60px;line-height:20px;">4</div>
<div class="a t num" style="left:305.75px;top:655.60px;line-height:20px;letter-spacing:0.003px;">Июнь 2025</div>
<div class="a t num" style="right:1251.50px;top:655.60px;line-height:20px;letter-spacing:-0.308px;">29,60</div>
<div class="a t num" style="right:1034.00px;top:655.60px;line-height:20px;letter-spacing:-0.329px;">1 500,00</div>
<div class="a t num" style="right:816.90px;top:655.60px;line-height:20px;letter-spacing:-0.329px;">1 500,00</div>
<div class="a t num" style="right:601.10px;top:655.60px;line-height:20px;letter-spacing:-0.329px;">1 500,00</div>
<div class="a t num" style="right:482.50px;top:655.60px;line-height:20px;letter-spacing:-0.232px;">1,0000</div>
<div class="a t num" style="right:265.10px;top:655.60px;line-height:20px;letter-spacing:-0.329px;">1 500,00</div>
<div class="a " style="left:1673.40px;top:658.10px;width:14.00px;height:14.00px;background:#fff;border:1px solid #a8a8a8;border-radius:1px;"></div>
<div class="a " style="left:212.00px;top:707.50px;width:1677.50px;height:1.00px;background:#ececec;"></div>
<div class="a " style="left:212.00px;top:889.20px;width:1677.50px;height:62.80px;background:#f2f2f2;border-top:1px solid #e2e2e2;"></div>
<div class="a " style="left:296.25px;top:890.20px;width:1.00px;height:61.80px;background:#dcdcdc;"></div>
<div class="a " style="left:460.50px;top:890.20px;width:1.00px;height:61.80px;background:#dcdcdc;"></div>
<div class="a " style="left:678.00px;top:890.20px;width:1.00px;height:61.80px;background:#dcdcdc;"></div>
<div class="a " style="left:895.50px;top:890.20px;width:1.00px;height:61.80px;background:#dcdcdc;"></div>
<div class="a " style="left:1112.60px;top:890.20px;width:1.00px;height:61.80px;background:#dcdcdc;"></div>
<div class="a " style="left:1328.40px;top:890.20px;width:1.00px;height:61.80px;background:#dcdcdc;"></div>
<div class="a " style="left:1447.00px;top:890.20px;width:1.00px;height:61.80px;background:#dcdcdc;"></div>
<div class="a " style="left:1664.40px;top:890.20px;width:1.00px;height:61.80px;background:#dcdcdc;"></div>
<div class="a " style="left:1761.75px;top:890.20px;width:1.00px;height:61.80px;background:#d0d0d0;"></div>
<div class="a " style="left:1762.75px;top:920.20px;width:126.75px;height:1.00px;background:#d0d0d0;"></div>
<div class="a t hdr" style="right:1251.50px;top:895.20px;line-height:20px;letter-spacing:-0.079px;">118,40</div>
<div class="a t hdr" style="right:1034.00px;top:895.20px;line-height:20px;letter-spacing:-0.329px;">6 000,00</div>
<div class="a t hdr" style="right:265.10px;top:895.20px;line-height:20px;letter-spacing:-0.329px;">6 000,00</div>
<div class="a " style="left:212.00px;top:952.00px;width:1677.50px;height:13.75px;background:#fff;"></div>
<div class="a " style="left:234.38px;top:956.00px;width:1633.12px;height:7.00px;background:#dadada;border-radius:4px;"></div>
<div class="a " style="left:234.38px;top:955.60px;width:1208.43px;height:7.80px;background:#969696;border-radius:4px;"></div>
<svg class="a" style="left:221.25px;top:957px" width="4" height="6" viewBox="0 0 4 6"><path d="M3.5 .5v5L.5 3z" fill="#bbb"/></svg>
<svg class="a" style="left:1876.88px;top:956px" width="5" height="7" viewBox="0 0 5 7"><path d="M.3 0v7l4.4-3.5z" fill="#333"/></svg>
<div class="a " style="left:198.75px;top:985.50px;width:542.25px;height:34.00px;background:#fefeee;"></div>
<div class="a t lbl" style="left:203.60px;top:995.50px;line-height:20px;letter-spacing:-0.145px;">Средняя:</div>
<div class="a fld" style="left:265.90px;top:992.40px;width:181.70px;height:23.60px;"></div>
<div class="a t " style="right:1495.70px;top:995.50px;line-height:20px;color:#444;letter-spacing:-0.308px;">50,68</div>
<div class="a " style="left:425.60px;top:993.40px;width:1.00px;height:21.60px;background:#b8b8b8;"></div>
<svg class="a" style="left:432.10px;top:998.70px" width="10" height="11" viewBox="0 0 10 11"><rect x=".6" y=".6" width="8.8" height="9.8" rx="1" fill="#fff" stroke="#555" stroke-width="1.2"/><rect x="2.3" y="2.2" width="5.4" height="2" fill="#555"/><rect x="2.3" y="5.6" width="1.6" height="1.3" fill="#555"/><rect x="6.1" y="5.6" width="1.6" height="1.3" fill="#555"/><rect x="2.3" y="7.8" width="1.6" height="1.3" fill="#555"/><rect x="6.1" y="7.8" width="1.6" height="1.3" fill="#555"/></svg>
<div class="a t lbl" style="left:457.00px;top:995.50px;line-height:20px;letter-spacing:-0.024px;">Сумма отпуска:</div>
<div class="a " style="left:553.20px;top:986.70px;width:188.60px;height:32.80px;border:4px solid #e8101c;background:#fff;"></div>
<div class="a fld" style="left:557.00px;top:991.00px;width:181.00px;height:25.00px;background:#a8a8a8;"></div>
<div class="a t " style="right:1203.70px;top:994.80px;line-height:20px;color:#444;letter-spacing:-0.329px;">1 317,68</div>
<div class="a " style="left:717.50px;top:992.00px;width:1.00px;height:23.00px;background:#b8b8b8;"></div>
<svg class="a" style="left:723.25px;top:998.00px" width="10" height="11" viewBox="0 0 10 11"><rect x=".6" y=".6" width="8.8" height="9.8" rx="1" fill="#fff" stroke="#555" stroke-width="1.2"/><rect x="2.3" y="2.2" width="5.4" height="2" fill="#555"/><rect x="2.3" y="5.6" width="1.6" height="1.3" fill="#555"/><rect x="6.1" y="5.6" width="1.6" height="1.3" fill="#555"/><rect x="2.3" y="7.8" width="1.6" height="1.3" fill="#555"/><rect x="6.1" y="7.8" width="1.6" height="1.3" fill="#555"/></svg>
</div></body></html>
